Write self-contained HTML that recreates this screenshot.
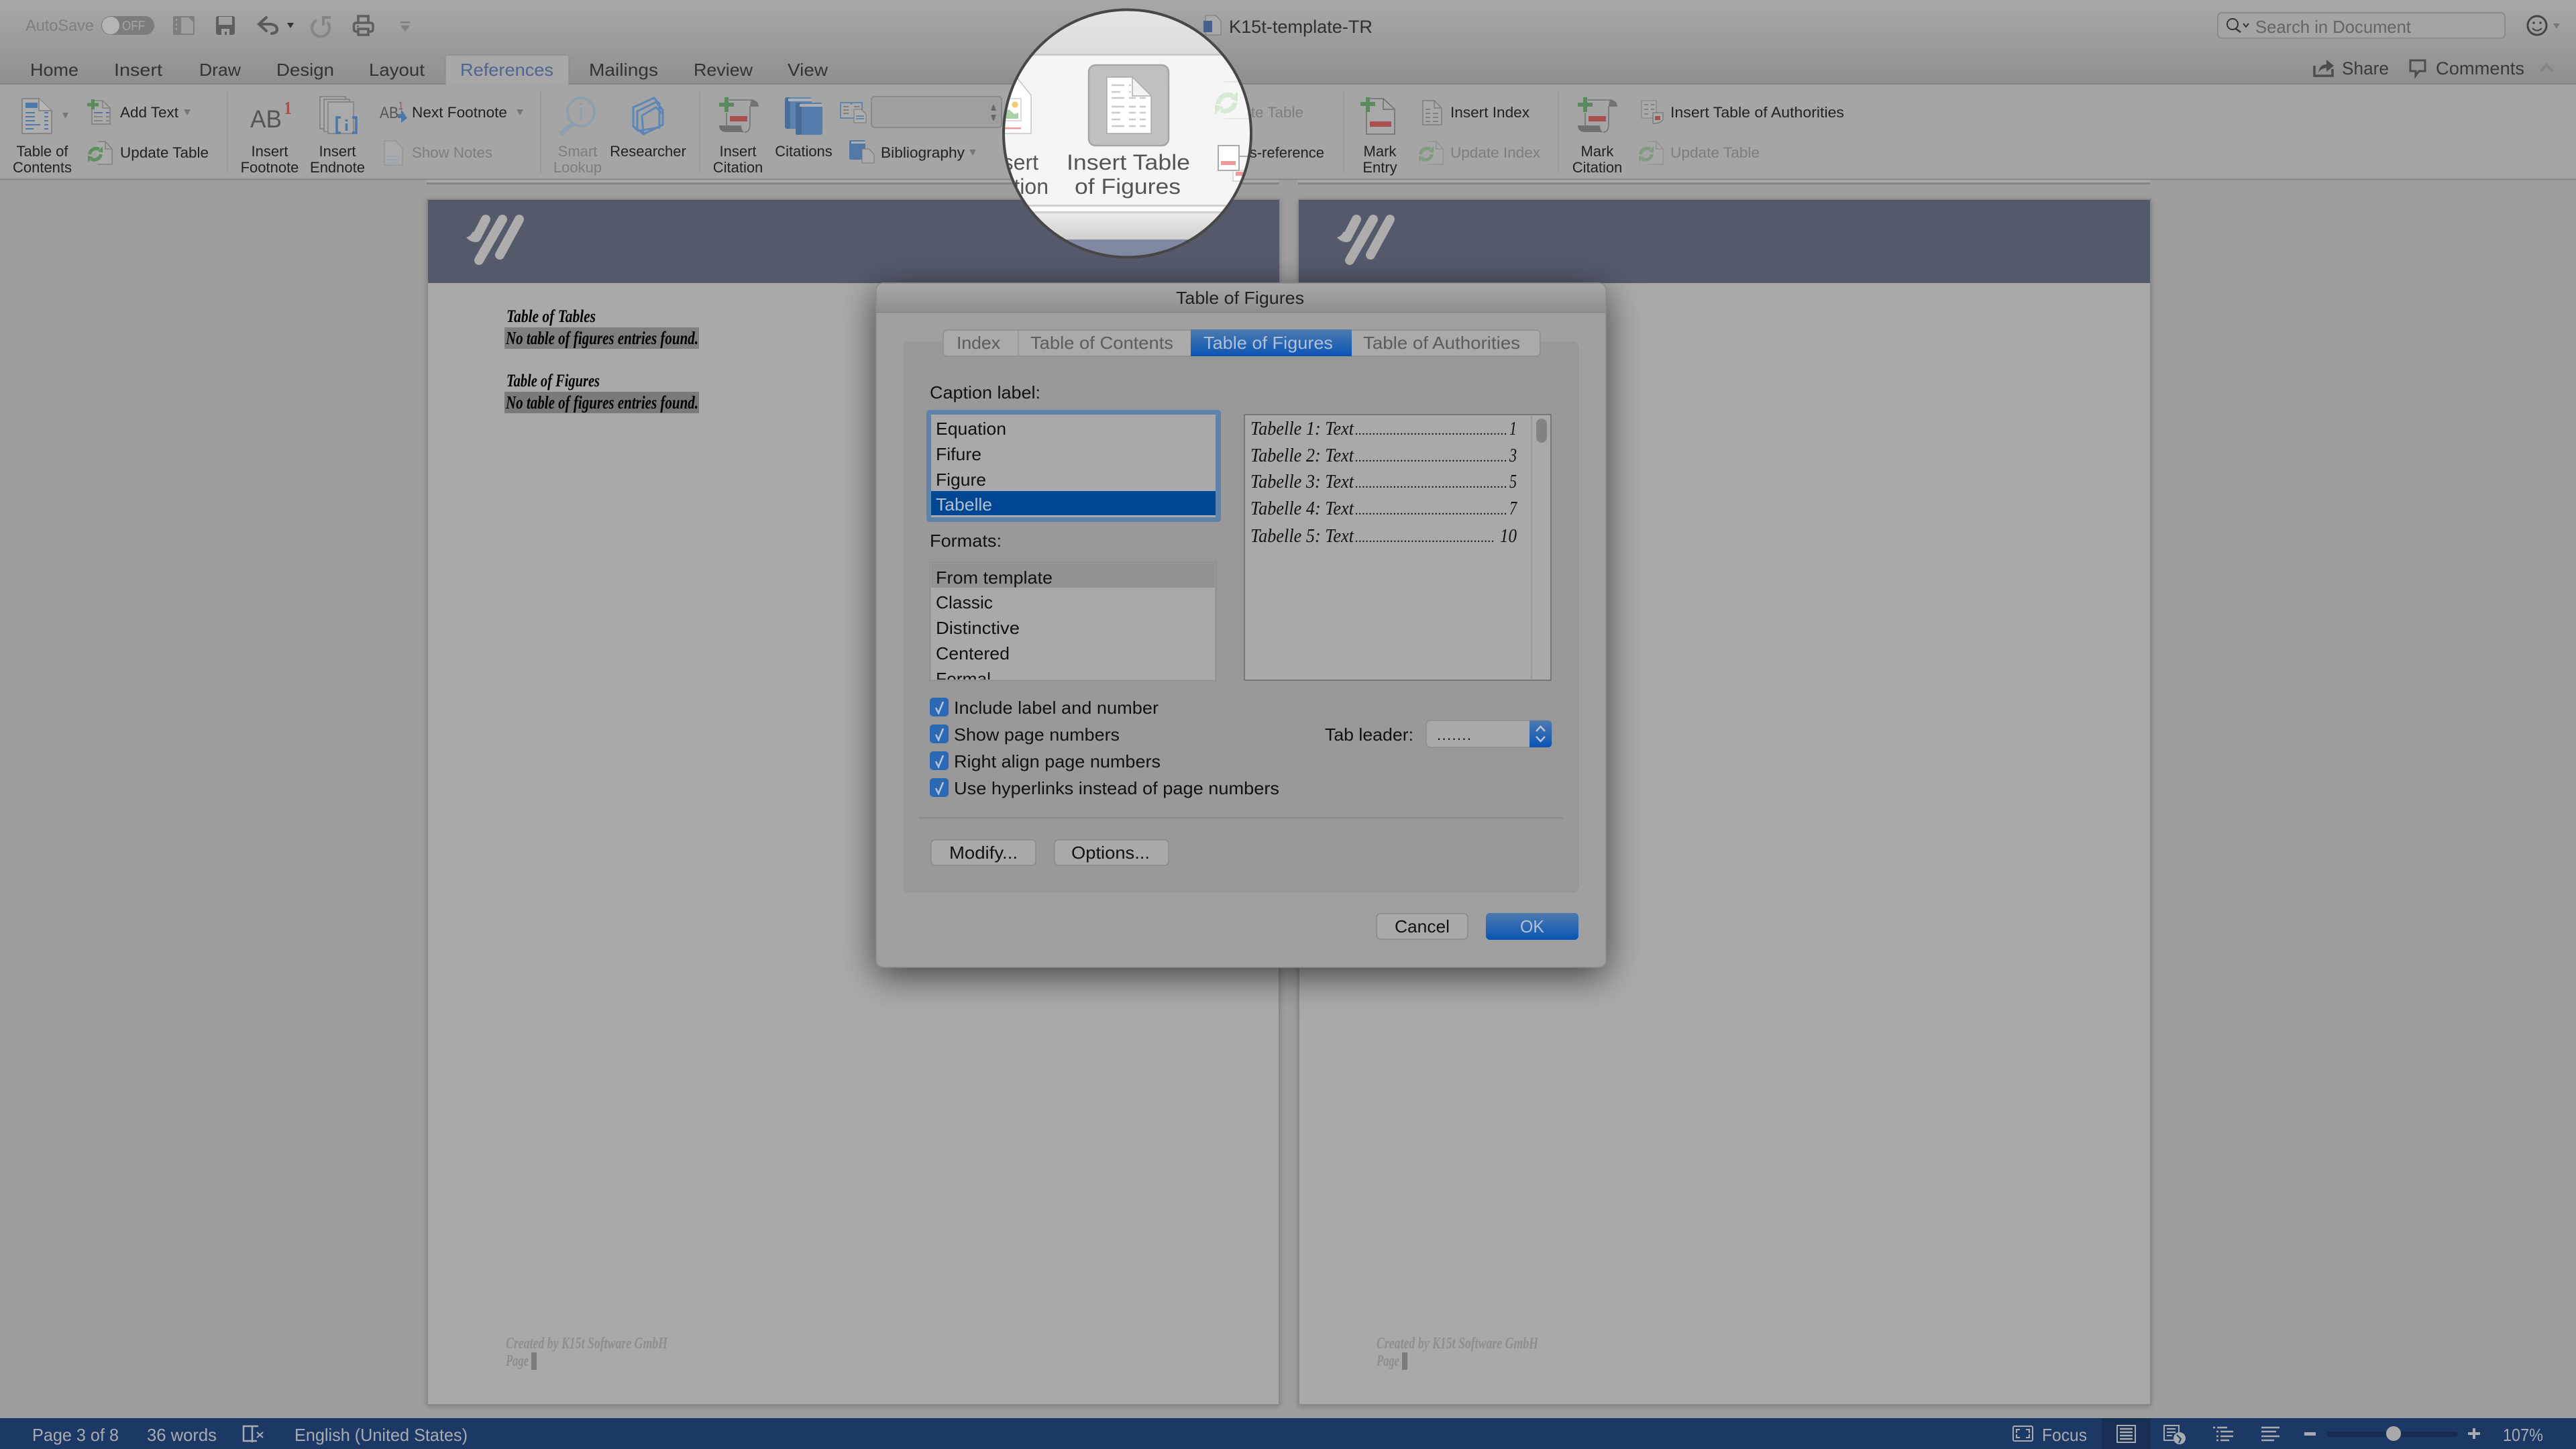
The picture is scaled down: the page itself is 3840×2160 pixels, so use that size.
<!DOCTYPE html>
<html><head><meta charset="utf-8"><style>
html,body{margin:0;padding:0;background:#9e9e9e;overflow:hidden}
svg{display:block;font-size:22px}
text{font-family:"Liberation Sans",sans-serif;fill:#222}
.tab{font-size:26px;fill:#333}
.g{fill:#7e7e7e}
.d{font-size:26px;fill:#111}
.h{font-family:"Liberation Serif",serif;font-style:italic;font-weight:bold;fill:#000}
.p{font-family:"Liberation Serif",serif;font-style:italic;font-size:28px;fill:#111}
.dots{font-size:20px}
.s{font-size:26px;fill:#a8abb0}
.f{font-family:"Liberation Serif",serif;font-style:italic;font-weight:bold;font-size:24px;fill:#8e8e8e}
.m{font-size:32px;fill:#555}
</style></head><body>
<svg xmlns="http://www.w3.org/2000/svg" width="3840" height="2160" viewBox="0 0 3840 2160">
<defs>
<linearGradient id="tb" x1="0" y1="0" x2="0" y2="1"><stop offset="0" stop-color="#a8a8a8"/><stop offset="1" stop-color="#8f8f8f"/></linearGradient>
<linearGradient id="blue" x1="0" y1="0" x2="0" y2="1"><stop offset="0" stop-color="#4d7aaf"/><stop offset="1" stop-color="#0a54b4"/></linearGradient>
<linearGradient id="m1" x1="0" y1="0" x2="0" y2="1"><stop offset="0" stop-color="#e6e6e6"/><stop offset="1" stop-color="#dcdcdc"/></linearGradient>
<linearGradient id="m2" x1="0" y1="0" x2="0" y2="1"><stop offset="0" stop-color="#ececec"/><stop offset="1" stop-color="#cfcfcf"/></linearGradient>
<filter id="ds" x="-15%" y="-15%" width="130%" height="135%"><feDropShadow dx="0" dy="12" stdDeviation="26" flood-color="#000" flood-opacity=".62"/></filter>
<filter id="ps" x="-3%" y="-3%" width="106%" height="106%"><feDropShadow dx="0" dy="2" stdDeviation="4" flood-color="#000" flood-opacity=".2"/></filter>
<clipPath id="mc"><circle cx="1680.5" cy="199" r="184"/></clipPath>
<clipPath id="fc"><rect x="1388" y="840" width="423" height="173"/></clipPath>
<g id="logo" fill="#adadad">
<path d="M774 327 L745 380" stroke="#adadad" stroke-width="14" stroke-linecap="round"/>
<path d="M749 327 L714 388" stroke="#adadad" stroke-width="14" stroke-linecap="round"/>
<path d="M724 327 L710 354" stroke="#adadad" stroke-width="14" stroke-linecap="round"/>
<path d="M695 354 Q702 352 705 345 L716 358 Q705 365 695 354Z"/>
</g>
<g id="upd">
<path d="M14 1 H26 L36 12 V35 H14" fill="#aaa" stroke="#808080" stroke-width="1.500"/>
<path d="M26 1 V12 H36" fill="none" stroke="#808080" stroke-width="1.500"/>
<path d="M2.500 20 A10 10 0 0 1 17 12.500 M19.500 20 A10 10 0 0 1 5 27" fill="none" stroke="#5f9160" stroke-width="5"/>
<path d="M15 16 L22 8 V17.500Z M7 24 L0 32 V22Z" fill="#5f9160"/>
</g>
<g id="sheet">
<path d="M0 0 H17 L28 11 V36 H0Z" fill="#a9a9a9" stroke="#7e7e7e" stroke-width="1.500"/>
<path d="M17 0 V11 H28" fill="none" stroke="#7e7e7e" stroke-width="1.500"/>
<path d="M4 13 H11 M4 19 H11 M15 19 H23 M4 25 H11 M15 25 H23 M4 31 H11 M15 31 H23" stroke="#808080" stroke-width="2"/>
</g>
<g id="scroll">
<path d="M15 4 H51 M46 14 V40 Q46 52 38 52 M11 23 V42" fill="none" stroke="#6e6e6e" stroke-width="1.500"/>
<path d="M46 14 Q46 4 51 4 Q59 6 59 14Z" fill="#747474"/>
<path d="M0 42 H33 Q33 50 38 52 H12 Q0 52 0 42Z" fill="#707070"/>
<rect x="16" y="28" width="26" height="8" fill="#a84f4f"/>
<path d="M11 0 V22 M0 11 H22" stroke="#5d8a5d" stroke-width="6"/>
</g>
</defs>

<!-- canvas -->
<rect width="3840" height="2160" fill="#9e9e9e"/>

<!-- strips of previous pages -->
<rect x="636" y="262" width="1271" height="11" fill="#aaa"/><rect x="636" y="272" width="1271" height="3" fill="#858585"/>
<rect x="1935" y="262" width="1270" height="11" fill="#aaa"/><rect x="1935" y="272" width="1270" height="3" fill="#858585"/>

<!-- pages -->
<g filter="url(#ps)">
<rect x="637" y="297" width="1270" height="1797" fill="#a9a9a9" stroke="#8a8a8a" stroke-width="2"/>
<rect x="1936" y="297" width="1270" height="1797" fill="#a9a9a9" stroke="#8a8a8a" stroke-width="2"/>
</g>
<rect x="638" y="298" width="1269" height="124" fill="#555a6b"/>
<rect x="1936" y="298" width="1269" height="124" fill="#555a6b"/>
<use href="#logo"/>
<use href="#logo" x="1298"/>

<text class="h" x="755" y="480" font-size="26" textLength="133" lengthAdjust="spacingAndGlyphs">Table of Tables</text>
<rect x="752" y="488" width="290" height="32" fill="#7f7f7f"/>
<text class="h" x="754" y="513" font-size="27" textLength="287" lengthAdjust="spacingAndGlyphs">No table of figures entries found.</text>
<text class="h" x="755" y="576" font-size="26" textLength="139" lengthAdjust="spacingAndGlyphs">Table of Figures</text>
<rect x="752" y="584" width="290" height="32" fill="#7a7a7a"/>
<text class="h" x="754" y="609" font-size="27" textLength="287" lengthAdjust="spacingAndGlyphs">No table of figures entries found.</text>

<text class="f" x="754" y="2010" textLength="241" lengthAdjust="spacingAndGlyphs">Created by K15t Software GmbH</text>
<rect x="792" y="2016" width="8" height="26" fill="#7b7b7b"/>
<text class="f" x="754" y="2036" textLength="34" lengthAdjust="spacingAndGlyphs">Page</text>
<text class="f" x="2052" y="2010" textLength="241" lengthAdjust="spacingAndGlyphs">Created by K15t Software GmbH</text>
<rect x="2090" y="2016" width="8" height="26" fill="#7b7b7b"/>
<text class="f" x="2052" y="2036" textLength="34" lengthAdjust="spacingAndGlyphs">Page</text>

<!-- title bar -->
<rect width="3840" height="125" fill="url(#tb)"/>
<rect y="124" width="3840" height="3" fill="#838383"/>
<!-- ribbon -->
<rect y="126" width="3840" height="141" fill="#a5a5a5"/>
<rect y="266" width="3840" height="2.500" fill="#8b8b8b"/>
<!-- active tab -->
<path d="M664 126 V85 Q664 82 667 82 H845 Q848 82 848 85 V126Z" fill="#a7a7a7" stroke="#8a8a8a" stroke-width="1"/>
<rect x="665" y="124" width="182" height="4" fill="#a5a5a5"/>

<!-- quick access -->
<text x="38" y="46" font-size="24" style="fill:#7f7f7f" textLength="102" lengthAdjust="spacingAndGlyphs">AutoSave</text>
<rect x="151" y="24" width="79" height="28" rx="14" fill="#7c7c7c"/>
<circle cx="165" cy="38" r="13" fill="#b5b5b5"/>
<text x="182" y="45" font-size="20" style="fill:#a5a5a5" textLength="34" lengthAdjust="spacingAndGlyphs">OFF</text>
<!-- sidebar -->
<rect x="258" y="24" width="32" height="28" rx="2" fill="#7e7e7e"/>
<path d="M270 26 H281 L288 33 V50 H270Z" fill="#a0a0a0"/>
<path d="M263 28 V31 M263 35 V38 M263 42 V45" stroke="#a0a0a0" stroke-width="2"/>
<!-- save -->
<rect x="322" y="24" width="28" height="28" rx="3" fill="#5f5f5f"/>
<rect x="326" y="25" width="20" height="12" fill="#a0a0a0"/>
<rect x="330" y="43" width="12" height="9" fill="#a0a0a0"/><rect x="335" y="47" width="3" height="5" fill="#5f5f5f"/>
<!-- undo -->
<path d="M397 26 L386 36 L397 46 M387 36 H403 Q413 37 413 44 Q413 49 405 50" fill="none" stroke="#5a5a5a" stroke-width="4" stroke-linecap="round"/>
<path d="M428 34 H438 L433 42Z" fill="#333"/>
<!-- redo -->
<path d="M472 30 A13 13 0 1 0 488 33 M493 26 H482 V38" fill="none" stroke="#858585" stroke-width="4"/>
<!-- print -->
<path d="M534 33 V24 H549 V33 M534 47 H531 Q527.500 47 527.500 43 V38 Q527.500 34 531 34 H552 Q556 34 556 38 V43 Q556 47 552 47 H549 M534 43 H549 V52 H534Z" fill="none" stroke="#5f5f5f" stroke-width="3.500"/>
<rect x="532" y="38" width="3" height="2" fill="#5f5f5f"/>
<!-- customize -->
<rect x="597" y="32" width="14" height="2.500" fill="#808080"/><path d="M597 38 H611 L604 47Z" fill="#808080"/>

<!-- document name -->
<path d="M1797 23 H1812 L1820 31 V52 H1797Z" fill="#aaa" stroke="#777" stroke-width="1"/>
<rect x="1794" y="31" width="13" height="17" fill="#46608c"/>
<text x="1832" y="49" font-size="27" style="fill:#303030" textLength="214" lengthAdjust="spacingAndGlyphs">K15t-template-TR</text>

<!-- tabs -->
<text class="tab" x="45" y="113" textLength="72" lengthAdjust="spacingAndGlyphs">Home</text>
<text class="tab" x="170" y="113" textLength="72" lengthAdjust="spacingAndGlyphs">Insert</text>
<text class="tab" x="297" y="113" textLength="62" lengthAdjust="spacingAndGlyphs">Draw</text>
<text class="tab" x="412" y="113" textLength="86" lengthAdjust="spacingAndGlyphs">Design</text>
<text class="tab" x="550" y="113" textLength="83" lengthAdjust="spacingAndGlyphs">Layout</text>
<text class="tab" x="686" y="113" style="fill:#4e6590" textLength="139" lengthAdjust="spacingAndGlyphs">References</text>
<text class="tab" x="878" y="113" textLength="103" lengthAdjust="spacingAndGlyphs">Mailings</text>
<text class="tab" x="1034" y="113" textLength="88" lengthAdjust="spacingAndGlyphs">Review</text>
<text class="tab" x="1174" y="113" textLength="60" lengthAdjust="spacingAndGlyphs">View</text>

<!-- right side title -->
<rect x="3306" y="19" width="428" height="38" rx="6" fill="#a4a4a4" stroke="#858585" stroke-width="1.500"/>
<circle cx="3328" cy="36" r="8" fill="none" stroke="#333" stroke-width="2"/><path d="M3333 43 L3340 48" stroke="#333" stroke-width="2.500"/>
<path d="M3344 35 L3348 40 L3352 35" fill="none" stroke="#333" stroke-width="2"/>
<text x="3362" y="49" font-size="26" style="fill:#656565" textLength="232" lengthAdjust="spacingAndGlyphs">Search in Document</text>
<ellipse cx="3782" cy="38" rx="14" ry="14" fill="none" stroke="#444" stroke-width="3"/>
<circle cx="3777" cy="34" r="1.800" fill="#444"/><circle cx="3787" cy="34" r="1.800" fill="#444"/>
<path d="M3775 42 Q3782 49 3789 42" fill="none" stroke="#444" stroke-width="2"/>
<path d="M3806 35 H3816 L3811 43Z" fill="#777"/>

<path d="M3450 98 V113 H3477 V103" fill="none" stroke="#4d4d4d" stroke-width="3.500"/>
<path d="M3456 108 Q3458 96 3468 96 V89 L3479 98 L3468 107 V101 Q3460 102 3456 108Z" fill="#4d4d4d"/>
<text x="3491" y="111" font-size="27" style="fill:#3a3a3a" textLength="70" lengthAdjust="spacingAndGlyphs">Share</text>
<path d="M3593 90 H3615 V106 H3606 L3601 113 V106 H3593Z" fill="none" stroke="#4d4d4d" stroke-width="3"/>
<text x="3631" y="111" font-size="27" style="fill:#3a3a3a" textLength="132" lengthAdjust="spacingAndGlyphs">Comments</text>
<path d="M3788 106 L3796 97 L3805 106" fill="none" stroke="#858585" stroke-width="4"/>

<!-- ribbon separators -->
<path d="M339 135 V258 M806 135 V258 M1043 135 V258 M2003 135 V258 M2323 135 V258" stroke="#979797" stroke-width="1.500"/>

<!-- TOC icon -->
<path d="M33 147 H58 L77 165 V199 H33Z" fill="#aeaeae" stroke="#7a7a7a" stroke-width="1.500"/>
<path d="M58 147 V165 H77" fill="#b5b5b5" stroke="#7a7a7a" stroke-width="1.500"/>
<rect x="38" y="153" width="18" height="8" fill="#4f79a8"/>
<path d="M38 168 H52 M66 168 H72 M38 174 H52 M66 174 H72 M38 180 H52 M66 180 H72 M38 186 H60 M66 186 H72 M38 192 H50 M66 192 H72" stroke="#4f79a8" stroke-width="2"/>
<path d="M93 168 H102 L97.500 177Z" fill="#777"/>
<text x="63" y="233" text-anchor="middle">Table of</text>
<text x="63" y="257" text-anchor="middle">Contents</text>
<!-- Add Text -->
<path d="M137 150 H153 L164 161 V185 H137Z" fill="#aaa" stroke="#7e7e7e" stroke-width="1.500"/>
<path d="M153 150 V161 H164" fill="none" stroke="#7e7e7e" stroke-width="1.500"/>
<path d="M140 168 H153 M158 168 H163" stroke="#4f79a8" stroke-width="2"/>
<path d="M140 174 H153 M158 174 H163 M140 180 H153 M158 180 H163" stroke="#868686" stroke-width="2"/>
<path d="M138.500 148 V163 M130 156 H147" stroke="#5d8a5d" stroke-width="5"/>
<text x="179" y="175" textLength="87" lengthAdjust="spacingAndGlyphs">Add Text</text>
<path d="M274 163 H284 L279 172Z" fill="#777"/>
<!-- Update Table -->
<use href="#upd" x="131" y="210"/>
<text x="179" y="235" textLength="132" lengthAdjust="spacingAndGlyphs">Update Table</text>

<!-- Footnote -->
<text x="373" y="190" font-size="37" style="fill:#555" textLength="47" lengthAdjust="spacingAndGlyphs">AB</text>
<text x="423" y="170" font-size="27" style="fill:#a84f4f;font-family:'Liberation Serif',serif;font-weight:bold" textLength="12" lengthAdjust="spacingAndGlyphs">1</text>
<text x="402" y="233" text-anchor="middle">Insert</text>
<text x="402" y="257" text-anchor="middle">Footnote</text>
<!-- Endnote -->
<rect x="477" y="144" width="38" height="48" fill="#a9a9a9" stroke="#7e7e7e" stroke-width="1.500"/>
<rect x="483" y="148" width="38" height="48" fill="#a9a9a9" stroke="#7e7e7e" stroke-width="1.500"/>
<rect x="489" y="152" width="38" height="47" fill="#aaa" stroke="#7e7e7e" stroke-width="1.500"/>
<path d="M508 175 H502 V198 H508 M525 175 H531 V198 H525" fill="none" stroke="#4a76a8" stroke-width="3.500"/>
<path d="M516.500 178 V181 M516.500 184 V195" stroke="#4a76a8" stroke-width="3.500"/>
<text x="503" y="233" text-anchor="middle">Insert</text>
<text x="503" y="257" text-anchor="middle">Endnote</text>
<!-- Next footnote -->
<text x="566" y="176" font-size="24" style="fill:#555" textLength="28" lengthAdjust="spacingAndGlyphs">AB</text>
<text x="594" y="163" font-size="17" style="fill:#a04a4a" textLength="7" lengthAdjust="spacingAndGlyphs">1</text>
<path d="M593 170 H598 V163 L607 176 L598 183 V176 H593Z" fill="#4a76a8"/>
<text x="614" y="175" textLength="142" lengthAdjust="spacingAndGlyphs">Next Footnote</text>
<path d="M770 163 H780 L775 172Z" fill="#777"/>
<!-- Show notes -->
<path d="M573 210 H590 L600 221 V246 H573Z" fill="#aaa" stroke="#949494" stroke-width="1.500"/>
<path d="M577 238 H595 M577 233 H595 M577 243 H595" stroke="#98a4b2" stroke-width="2"/>
<text class="g" x="614" y="235" textLength="120" lengthAdjust="spacingAndGlyphs">Show Notes</text>

<!-- Smart Lookup -->
<ellipse cx="866" cy="167" rx="20" ry="21" fill="none" stroke="#8f9eae" stroke-width="4"/>
<path d="M854 185 L835 200" stroke="#8f9eae" stroke-width="7"/>
<path d="M866 160 V178" stroke="#8f9eae" stroke-width="3"/><circle cx="866" cy="155" r="2" fill="#8f9eae"/>
<text class="g" x="861" y="233" text-anchor="middle">Smart</text>
<text class="g" x="861" y="257" text-anchor="middle">Lookup</text>
<!-- Researcher -->
<path d="M944 160 L975 146 L983 155 V190 L951 195 L944 188Z M950 166 L978 152 L988 164 V186 L959 200 L950 192Z M957 172 L978 160 L988 170 V186 L959 200Z" fill="none" stroke="#5c87b6" stroke-width="3"/>
<text x="966" y="233" text-anchor="middle">Researcher</text>

<!-- Insert citation -->
<use href="#scroll" x="1072" y="145"/>
<text x="1100" y="233" text-anchor="middle">Insert</text>
<text x="1100" y="257" text-anchor="middle">Citation</text>
<!-- Citations -->
<rect x="1170" y="145" width="40" height="47" rx="3" fill="#5b82b0"/><rect x="1170" y="145" width="8" height="47" rx="3" fill="#4a6f9b"/><rect x="1175" y="147" width="35" height="4" fill="#b0b0b0"/>
<rect x="1186" y="153" width="40" height="48" rx="3" fill="#567dac"/><rect x="1186" y="153" width="9" height="48" rx="3" fill="#476c98"/><rect x="1192" y="155" width="34" height="4" fill="#b0b0b0"/>
<text x="1198" y="233" text-anchor="middle">Citations</text>
<!-- manage sources -->
<path d="M1253 153 H1268 L1269 155 L1270 153 H1285 V176 H1253Z" fill="#aaa" stroke="#4f79a9" stroke-width="1.500"/>
<path d="M1257 159 H1265 M1257 164 H1265 M1257 169 H1265 M1273 159 H1281" stroke="#808080" stroke-width="2"/>
<path d="M1273 163 H1284 L1291 170 V183 H1273Z" fill="#adadad" stroke="#777"/>
<path d="M1276 173 H1288 M1276 177 H1288" stroke="#4f79a9" stroke-width="1.500"/>
<!-- combobox -->
<rect x="1299" y="144" width="194" height="46" rx="5" fill="#9f9f9f" stroke="#8a8a8a" stroke-width="2"/>
<path d="M1477 165 L1481 155 L1485 165Z M1477 171 H1485 L1481 181Z" fill="#666"/>
<!-- Bibliography -->
<rect x="1266" y="209" width="24" height="29" rx="2" fill="#5278a6"/><rect x="1269" y="211" width="21" height="3" fill="#b0b0b0"/>
<path d="M1285 222 H1295 L1303 230 V243 H1285Z" fill="#aaa" stroke="#777"/>
<text x="1313" y="235" textLength="125" lengthAdjust="spacingAndGlyphs">Bibliography</text>
<path d="M1445 223 H1455 L1450 232Z" fill="#777"/>

<!-- under-magnifier texts -->
<text x="1943" y="175" text-anchor="end" class="g" textLength="132" lengthAdjust="spacingAndGlyphs">Update Table</text>
<text x="1974" y="235" text-anchor="end">Cross-reference</text>

<!-- Mark entry -->
<path d="M2037 147 H2062 L2079 163 V200 H2037Z" fill="#a9a9a9" stroke="#6e6e6e" stroke-width="1.500"/>
<path d="M2062 147 V163 H2079" fill="none" stroke="#6e6e6e" stroke-width="1.500"/>
<rect x="2042" y="181" width="32" height="8" fill="#a84f4f"/>
<path d="M2039 145 V167 M2028 155 H2050" stroke="#5d8a5d" stroke-width="6"/>
<text x="2057" y="233" text-anchor="middle">Mark</text>
<text x="2057" y="257" text-anchor="middle">Entry</text>
<!-- Insert index -->
<use href="#sheet" x="2121" y="150"/>
<text x="2162" y="175" textLength="118" lengthAdjust="spacingAndGlyphs">Insert Index</text>
<use href="#upd" x="2115" y="210" opacity=".5"/>
<text class="g" x="2162" y="235" textLength="134" lengthAdjust="spacingAndGlyphs">Update Index</text>
<!-- Mark citation -->
<use href="#scroll" x="2352" y="145"/>
<text x="2381" y="233" text-anchor="middle">Mark</text>
<text x="2381" y="257" text-anchor="middle">Citation</text>
<!-- TOA -->
<rect x="2447" y="150" width="22" height="26" fill="#aaa" stroke="#7e7e7e"/>
<path d="M2451 156 H2457 M2461 156 H2466 M2451 163 H2457 M2461 163 H2466 M2451 170 H2457" stroke="#808080" stroke-width="2"/>
<path d="M2464 168 H2479 V178 Q2476 184 2464 184Z" fill="#aaa" stroke="#666"/><rect x="2467" y="173" width="8" height="6" fill="#a84f4f"/>
<text x="2490" y="175" textLength="259" lengthAdjust="spacingAndGlyphs">Insert Table of Authorities</text>
<use href="#upd" x="2443" y="210" opacity=".5"/>
<text class="g" x="2490" y="235" textLength="133" lengthAdjust="spacingAndGlyphs">Update Table</text>

<!-- magnifier -->
<g clip-path="url(#mc)">
<rect x="1490" y="10" width="380" height="70" fill="url(#m1)"/>
<rect x="1490" y="80" width="380" height="3" fill="#cbcbcb"/>
<rect x="1490" y="83" width="380" height="222" fill="#f5f5f5"/>
<rect x="1490" y="305" width="380" height="3" fill="#cfcfcf"/>
<rect x="1490" y="308" width="380" height="7" fill="#fff"/>
<rect x="1490" y="315" width="380" height="3" fill="#cfcfcf"/>
<rect x="1490" y="318" width="380" height="39" fill="url(#m2)"/>
<rect x="1490" y="357" width="380" height="30" fill="#8088a4"/>
<!-- big button -->
<rect x="1623" y="97" width="119" height="120" rx="10" fill="#c0c0c0" stroke="#a6a6a6" stroke-width="2.500"/>
<path d="M1650 115 H1688 L1716 143 V199 H1650Z" fill="#fff" stroke="#a8a8a8" stroke-width="1.500"/>
<path d="M1657 127 H1676 M1683 127 H1686 M1657 137 H1670 M1683 137 H1686 M1657 146 H1676 M1683 146 H1693 M1699 146 H1708 M1657 159 H1676 M1683 159 H1693 M1699 159 H1708 M1657 168 H1670 M1683 168 H1693 M1699 168 H1708 M1657 178 H1670 M1683 178 H1693 M1699 178 H1708 M1657 188 H1676 M1683 188 H1693 M1699 188 H1708" stroke="#cacaca" stroke-width="2.500"/>
<path d="M1688 115 V143 H1716Z" fill="#f3f3f3" stroke="#b0b0b0" stroke-width="1.500"/>
<text class="m" x="1682" y="253" text-anchor="middle" textLength="184" lengthAdjust="spacingAndGlyphs">Insert Table</text>
<text class="m" x="1681" y="289" text-anchor="middle" textLength="158" lengthAdjust="spacingAndGlyphs">of Figures</text>
<text class="m" x="1548" y="253" text-anchor="end">Insert</text>
<text class="m" x="1563" y="289" text-anchor="end">Caption</text>
<!-- left doc -->
<path d="M1490 110 H1511 L1537 142 V199 H1490Z" fill="#fff" stroke="#c5c5c5" stroke-width="1.500"/>
<rect x="1490" y="147" width="32" height="33" fill="#fff" stroke="#cfcfcf" stroke-width="1.500"/>
<circle cx="1513" cy="156" r="4.700" fill="#f0cf73"/>
<path d="M1492 170 L1504 163 L1512 170 L1518 168 V177 H1492Z" fill="#a8d3a8"/>
<rect x="1490" y="190" width="32" height="2.500" fill="#ee9a9a"/>
<!-- right refresh -->
<path d="M1825 122 H1870 V177 H1825" fill="#f7f7f7" stroke="#d8d8d8"/>
<path d="M1816 155 A15 15 0 0 1 1838 143 M1841 153 A15 15 0 0 1 1820 164" fill="none" stroke="#d6e8d6" stroke-width="7"/>
<path d="M1834 148 L1845 136 V151Z M1823 159 L1811 171 V156Z" fill="#d6e8d6"/>
<!-- right cross ref -->
<rect x="1838" y="254" width="30" height="16" fill="#fff" stroke="#bbb"/>
<rect x="1842" y="256" width="22" height="6" fill="#ee9a9a"/>
<rect x="1816" y="217" width="31" height="37" fill="#fff" stroke="#aaa" stroke-width="2"/>
<rect x="1820" y="240" width="22" height="6" fill="#ee9a9a"/>
<path d="M1847 233 H1870" stroke="#aaa" stroke-width="2"/>
</g>
<circle cx="1680.5" cy="199" r="184.5" fill="none" stroke="#474747" stroke-width="4"/>

<!-- dialog -->
<g filter="url(#ds)">
<rect x="1306" y="422" width="1088" height="1020" rx="10" fill="#a0a0a0"/>
</g>
<path d="M1306 465 V432 Q1306 422 1316 422 H2384 Q2394 422 2394 432 V465Z" fill="url(#tb)"/>
<rect x="1306" y="465" width="1088" height="1.500" fill="#858585"/>
<rect x="1306" y="422" width="1088" height="1020" rx="10" fill="none" stroke="#8b8b8b" stroke-width="1.500"/>
<text x="1753" y="453" font-size="26" style="fill:#222" textLength="191" lengthAdjust="spacingAndGlyphs">Table of Figures</text>

<!-- group box -->
<rect x="1347" y="510" width="1006" height="820" rx="8" fill="#999" stroke="#939393"/>
<!-- tabs -->
<rect x="1406" y="492" width="890" height="39" rx="6" fill="#aaa" stroke="#8d8d8d" stroke-width="1.500"/>
<rect x="1775" y="491" width="240" height="40" fill="url(#blue)"/>
<path d="M1518 492 V531" stroke="#949494" stroke-width="1.500"/>
<text class="d" x="1426" y="520" style="fill:#5c5c5c" textLength="65" lengthAdjust="spacingAndGlyphs">Index</text>
<text class="d" x="1536" y="520" style="fill:#5c5c5c" textLength="213" lengthAdjust="spacingAndGlyphs">Table of Contents</text>
<text class="d" x="1794" y="520" style="fill:#b0c0d5" textLength="193" lengthAdjust="spacingAndGlyphs">Table of Figures</text>
<text class="d" x="2032" y="520" style="fill:#5c5c5c" textLength="234" lengthAdjust="spacingAndGlyphs">Table of Authorities</text>

<text class="d" x="1386" y="594" textLength="165" lengthAdjust="spacingAndGlyphs">Caption label:</text>
<!-- caption list -->
<rect x="1381" y="611" width="439" height="167" rx="5" fill="#5f82ab"/>
<rect x="1388" y="618" width="424" height="153" fill="#a9a9a9"/>
<rect x="1388" y="732" width="424" height="36" fill="#004793"/>
<text class="d" x="1395" y="648" textLength="105" lengthAdjust="spacingAndGlyphs">Equation</text>
<text class="d" x="1395" y="686" textLength="68" lengthAdjust="spacingAndGlyphs">Fifure</text>
<text class="d" x="1395" y="724" textLength="75" lengthAdjust="spacingAndGlyphs">Figure</text>
<text class="d" x="1395" y="761" style="fill:#b3bfd0" textLength="84" lengthAdjust="spacingAndGlyphs">Tabelle</text>

<text class="d" x="1386" y="815" textLength="107" lengthAdjust="spacingAndGlyphs">Formats:</text>
<!-- formats list -->
<rect x="1386.500" y="838.500" width="426" height="176" fill="#a9a9a9" stroke="#8e8e8e" stroke-width="2"/>
<rect x="1388" y="840" width="423" height="36" fill="#939393"/>
<text class="d" x="1395" y="870" textLength="174" lengthAdjust="spacingAndGlyphs">From template</text>
<text class="d" x="1395" y="907" textLength="85" lengthAdjust="spacingAndGlyphs">Classic</text>
<text class="d" x="1395" y="945" textLength="125" lengthAdjust="spacingAndGlyphs">Distinctive</text>
<text class="d" x="1395" y="983" textLength="110" lengthAdjust="spacingAndGlyphs">Centered</text>
<g clip-path="url(#fc)"><text class="d" x="1395" y="1021" textLength="82" lengthAdjust="spacingAndGlyphs">Formal</text></g>

<!-- preview -->
<rect x="1855" y="618" width="457" height="396" fill="#a9a9a9" stroke="#787878" stroke-width="2"/>
<path d="M2283 619 V1013" stroke="#9a9a9a" stroke-width="2"/>
<rect x="2290" y="624" width="16" height="36" rx="8" fill="#838383"/>
<text class="p" x="1864" y="648" textLength="154" lengthAdjust="spacingAndGlyphs">Tabelle 1: Text</text><text class="p dots" x="2020" y="648" textLength="227">............................................</text><text class="p" x="2250" y="648" textLength="11" lengthAdjust="spacingAndGlyphs">1</text>
<text class="p" x="1864" y="688" textLength="154" lengthAdjust="spacingAndGlyphs">Tabelle 2: Text</text><text class="p dots" x="2020" y="688" textLength="227">............................................</text><text class="p" x="2250" y="688" textLength="11" lengthAdjust="spacingAndGlyphs">3</text>
<text class="p" x="1864" y="727" textLength="154" lengthAdjust="spacingAndGlyphs">Tabelle 3: Text</text><text class="p dots" x="2020" y="727" textLength="227">............................................</text><text class="p" x="2250" y="727" textLength="11" lengthAdjust="spacingAndGlyphs">5</text>
<text class="p" x="1864" y="767" textLength="154" lengthAdjust="spacingAndGlyphs">Tabelle 4: Text</text><text class="p dots" x="2020" y="767" textLength="227">............................................</text><text class="p" x="2250" y="767" textLength="11" lengthAdjust="spacingAndGlyphs">7</text>
<text class="p" x="1864" y="808" textLength="154" lengthAdjust="spacingAndGlyphs">Tabelle 5: Text</text><text class="p dots" x="2020" y="808" textLength="208">........................................</text><text class="p" x="2236" y="808" textLength="25" lengthAdjust="spacingAndGlyphs">10</text>

<!-- checkboxes -->
<g fill="#2b69b4">
<rect x="1386" y="1040" width="28" height="28" rx="5"/>
<rect x="1386" y="1080" width="28" height="28" rx="5"/>
<rect x="1386" y="1120" width="28" height="28" rx="5"/>
<rect x="1386" y="1160" width="28" height="28" rx="5"/>
</g>
<g fill="none" stroke="#bac6d6" stroke-width="2.500">
<path d="M1395 1055 L1399 1063 L1406 1046"/>
<path d="M1395 1095 L1399 1103 L1406 1086"/>
<path d="M1395 1135 L1399 1143 L1406 1126"/>
<path d="M1395 1175 L1399 1183 L1406 1166"/>
</g>
<text class="d" x="1422" y="1064" textLength="305" lengthAdjust="spacingAndGlyphs">Include label and number</text>
<text class="d" x="1422" y="1104" textLength="247" lengthAdjust="spacingAndGlyphs">Show page numbers</text>
<text class="d" x="1422" y="1144" textLength="308" lengthAdjust="spacingAndGlyphs">Right align page numbers</text>
<text class="d" x="1422" y="1184" textLength="485" lengthAdjust="spacingAndGlyphs">Use hyperlinks instead of page numbers</text>

<text class="d" x="1975" y="1104" textLength="132" lengthAdjust="spacingAndGlyphs">Tab leader:</text>
<rect x="2126" y="1074" width="187" height="40" rx="6" fill="#a9a9a9" stroke="#8d8d8d" stroke-width="1.500"/>
<path d="M2280 1074 H2307 Q2313 1074 2313 1080 V1108 Q2313 1114 2307 1114 H2280Z" fill="url(#blue)"/>
<path d="M2290 1090 L2296.500 1083 L2303 1090 M2290 1098 L2296.500 1105 L2303 1098" fill="none" stroke="#b9c4d4" stroke-width="2.500"/>
<text x="2142" y="1103" font-size="22" style="fill:#111" textLength="51">.......</text>

<rect x="1370" y="1218" width="960" height="2.500" fill="#8a8a8a"/>

<!-- buttons -->
<rect x="1388" y="1252" width="156" height="38" rx="6" fill="#a9a9a9" stroke="#8a8a8a" stroke-width="1.500"/>
<text class="d" x="1415" y="1280" textLength="102" lengthAdjust="spacingAndGlyphs">Modify...</text>
<rect x="1572" y="1252" width="170" height="38" rx="6" fill="#a9a9a9" stroke="#8a8a8a" stroke-width="1.500"/>
<text class="d" x="1597" y="1280" textLength="117" lengthAdjust="spacingAndGlyphs">Options...</text>
<rect x="2052" y="1362" width="136" height="38" rx="6" fill="#a9a9a9" stroke="#8a8a8a" stroke-width="1.500"/>
<text class="d" x="2079" y="1390" textLength="82" lengthAdjust="spacingAndGlyphs">Cancel</text>
<rect x="2215" y="1361" width="138" height="40" rx="6" fill="url(#blue)"/>
<text class="d" x="2266" y="1390" style="fill:#b0c0d5" textLength="36" lengthAdjust="spacingAndGlyphs">OK</text>

<!-- status bar -->
<rect y="2114" width="3840" height="46" fill="#1c3966"/>
<text class="s" x="48" y="2148" textLength="129" lengthAdjust="spacingAndGlyphs">Page 3 of 8</text>
<text class="s" x="219" y="2148" textLength="104" lengthAdjust="spacingAndGlyphs">36 words</text>
<path d="M363 2126 H376 V2148 H363Z M376 2126 H385 M376 2148 H383 M376 2148 V2150" fill="none" stroke="#a8abb0" stroke-width="2.500"/>
<path d="M383 2135 L392 2143 M392 2135 L383 2143" stroke="#a8abb0" stroke-width="2"/>
<text class="s" x="439" y="2148" textLength="258" lengthAdjust="spacingAndGlyphs">English (United States)</text>

<rect x="3001" y="2126" width="29" height="22" rx="2" fill="none" stroke="#a8abb0" stroke-width="2"/>
<path d="M3006 2136 V2131 H3011 M3020 2131 H3025 V2136 M3025 2138 V2143 H3020 M3011 2143 H3006 V2138" fill="none" stroke="#a8abb0" stroke-width="2"/>
<text class="s" x="3044" y="2148" textLength="67" lengthAdjust="spacingAndGlyphs">Focus</text>
<rect x="3133" y="2114" width="73" height="46" fill="#182f55"/>
<rect x="3156" y="2125" width="27" height="25" fill="none" stroke="#a8abb0" stroke-width="2"/>
<path d="M3160 2130 H3179 M3160 2135 H3179 M3160 2140 H3179 M3160 2145 H3179" stroke="#a8abb0" stroke-width="2.500"/>
<rect x="3226" y="2125" width="22" height="22" fill="none" stroke="#a8abb0" stroke-width="2"/>
<path d="M3230 2130 H3243 M3230 2135 H3243 M3230 2140 H3238" stroke="#a8abb0" stroke-width="2"/>
<circle cx="3249" cy="2144" r="9" fill="#a8abb0"/><path d="M3245 2139 L3251 2145 L3248 2151" fill="none" stroke="#1c3966" stroke-width="2"/>
<path d="M3305 2128 H3320 M3299 2128 H3302 M3310 2134 H3329 M3304 2134 H3307 M3310 2141 H3329 M3304 2141 H3307 M3310 2147 H3323 M3304 2147 H3307" stroke="#a8abb0" stroke-width="2.500"/>
<path d="M3371 2128 H3398 M3371 2134 H3393 M3371 2141 H3398 M3371 2147 H3390" stroke="#a8abb0" stroke-width="2.500"/>
<rect x="3435" y="2135" width="17" height="5" fill="#a8abb0"/>
<rect x="3468" y="2134" width="196" height="8" rx="4" fill="#162b50"/>
<ellipse cx="3568" cy="2137" rx="11" ry="11" fill="#a9a9a9"/>
<path d="M3679 2137 H3697 M3688 2129 V2145" stroke="#a8abb0" stroke-width="4"/>
<text class="s" x="3731" y="2148" textLength="60" lengthAdjust="spacingAndGlyphs">107%</text>
</svg>
</body></html>
